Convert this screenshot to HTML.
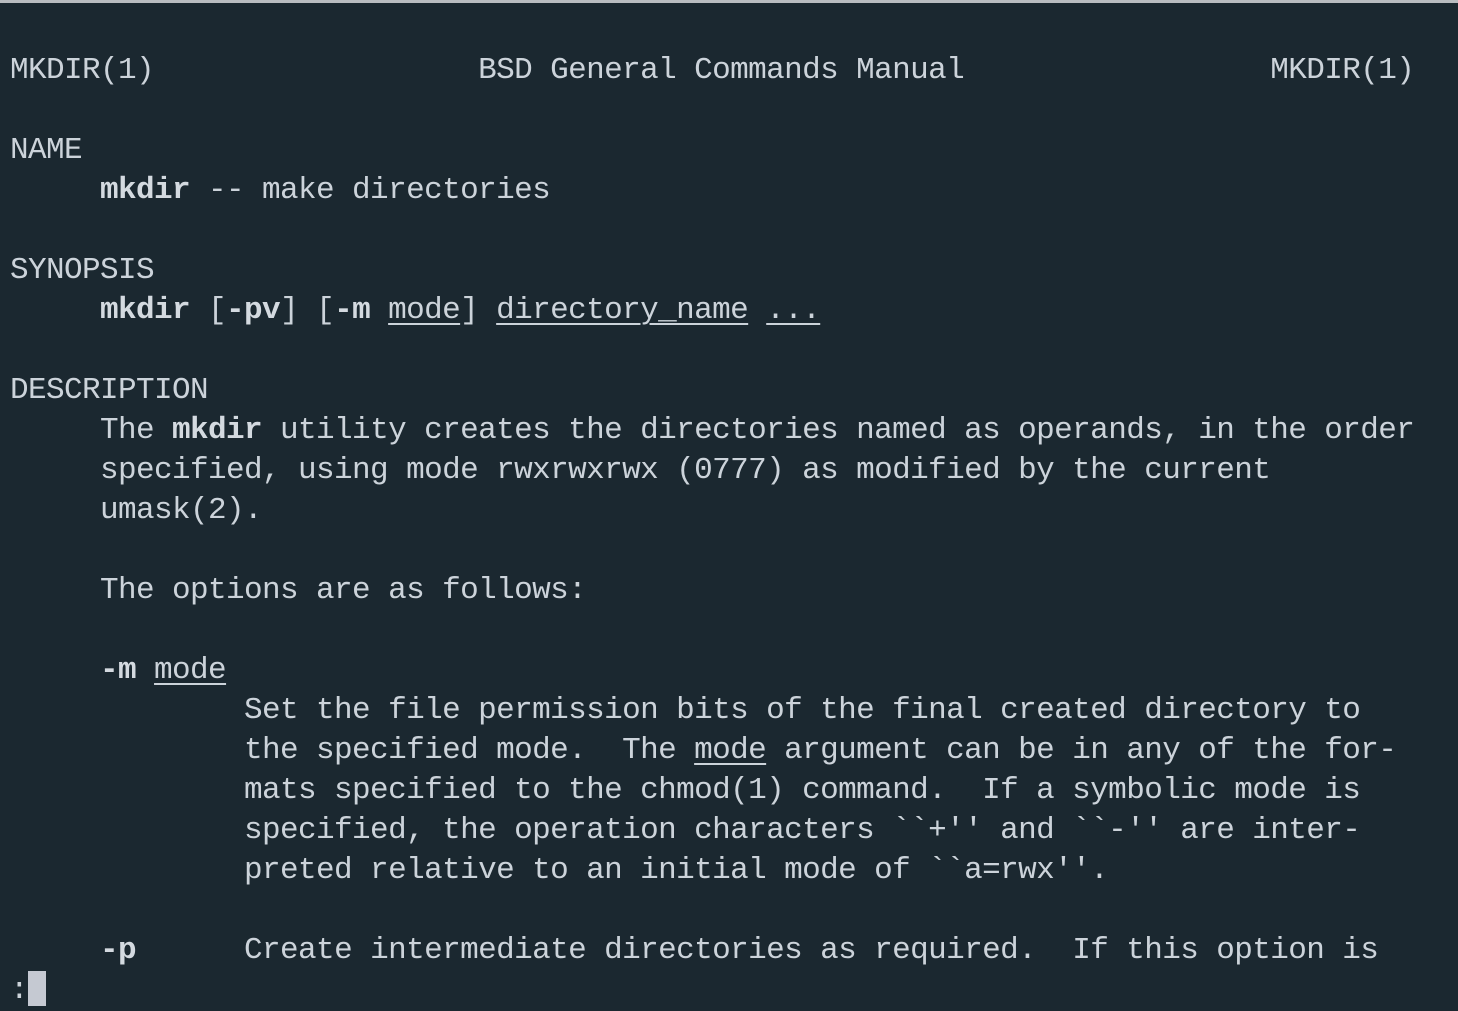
<!DOCTYPE html>
<html><head><style>
html,body{margin:0;padding:0;background:#1b2830;width:1458px;height:1008px;overflow:hidden}
.top{position:absolute;left:0;top:0;width:1458px;height:3px;background:#b9bcc0}
pre{position:absolute;left:10px;top:11px;margin:0;font-family:"Liberation Mono",monospace;font-size:31px;letter-spacing:-0.6px;line-height:40px;color:#ccd3da}
b{font-weight:bold;color:#d4dae0}
u{text-decoration:underline;text-underline-offset:5px;text-decoration-thickness:2px}
.cur{display:inline-block;width:18px;height:35px;background:#c5c9d2;vertical-align:-8px}
</style></head><body><div class="top"></div>
<pre>

MKDIR(1)                  BSD General Commands Manual                 MKDIR(1)

NAME
     <b>mkdir</b> -- make directories

SYNOPSIS
     <b>mkdir</b> [<b>-pv</b>] [<b>-m</b> <u>mode</u>] <u>directory_name</u> <u>...</u>

DESCRIPTION
     The <b>mkdir</b> utility creates the directories named as operands, in the order
     specified, using mode rwxrwxrwx (0777) as modified by the current
     umask(2).

     The options are as follows:

     <b>-m</b> <u>mode</u>
             Set the file permission bits of the final created directory to
             the specified mode.  The <u>mode</u> argument can be in any of the for-
             mats specified to the chmod(1) command.  If a symbolic mode is
             specified, the operation characters ``+'' and ``-'' are inter-
             preted relative to an initial mode of ``a=rwx''.

     <b>-p</b>      Create intermediate directories as required.  If this option is
:<span class="cur"></span></pre>
</body></html>
